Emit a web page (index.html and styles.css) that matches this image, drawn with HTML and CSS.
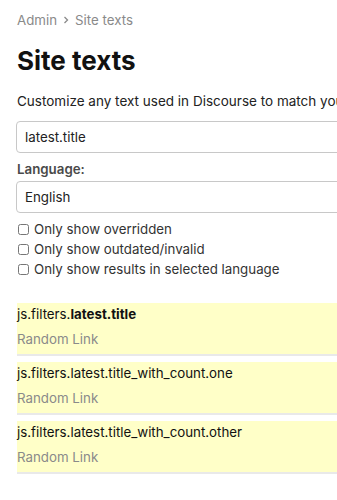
FILE: index.html
```html
<!DOCTYPE html>
<html lang="en">

<head>
    <meta charset="UTF-8">
    <meta name="viewport" content="width=device-width, initial-scale=1.0">
    <title>Site texts - Admin</title>
    <link rel="stylesheet" href="styles.css">
</head>

<body>
    <div id="page">
        <div class="breadcrumb">
            <span>Admin</span>
            <svg class="chevron" width="10" height="10" viewBox="0 0 10 10">
                <path d="M3.5 2 L6.5 5 L3.5 8" fill="none" stroke="#8a8a8a" stroke-width="1.3" />
            </svg>
            <span>Site texts</span>
        </div>

        <h1>Site texts</h1>
        <p class="intro">Customize any text used in Discourse to match your community.</p>

        <div class="search">
            <input type="text" class="field" value="latest.title">
            <label class="field-label">Language:</label>
            <div class="field select">English</div>

            <div class="filters">
                <label class="check"><input type="checkbox"> Only show overridden</label>
                <label class="check"><input type="checkbox"> Only show outdated/invalid</label>
                <label class="check"><input type="checkbox"> Only show results in selected language</label>
            </div>
        </div>

        <div class="results">
            <div class="site-text">
                <div class="site-text-id">js.filters.<b>latest.title</b></div>
                <div class="site-text-value">Random Link</div>
            </div>
            <div class="site-text">
                <div class="site-text-id">js.filters.latest.title_with_count.one</div>
                <div class="site-text-value">Random Link</div>
            </div>
            <div class="site-text">
                <div class="site-text-id">js.filters.latest.title_with_count.other</div>
                <div class="site-text-value">Random Link</div>
            </div>
        </div>
    </div>
</body>

</html>
```

FILE: styles.css
```css
html,
body {
    overflow: hidden;
}

body {
    font-family: Inter, "Noto Sans", sans-serif;
    font-size: 13.3px;
    background-color: #fff;
    color: #222;
    margin: 0;
}

#page {
    width: 560px;
    padding: 10px 16px 0 17px;
}

.breadcrumb {
    display: flex;
    align-items: center;
    gap: 4px;
    color: #8a8a8a;
    height: 20px;
}

h1 {
    font-size: 26px;
    font-weight: 700;
    color: #111;
    margin: 14px 0 0 0;
    line-height: 34px;
}

.intro {
    font-size: 13.5px;
    margin: 13px 0 0 0;
    line-height: 20px;
}

.search {
    margin-top: 10px;
}

.field {
    display: block;
    box-sizing: border-box;
    width: 100%;
    height: 32px;
    margin: 0 0 0 -1px;
    padding: 0 8px;
    border: 1px solid #c8c8c8;
    border-radius: 4px;
    font-family: Inter, sans-serif;
    font-size: 13.3px;
    color: #222;
    background: #fff;
}

.select {
    line-height: 30px;
}

.field-label {
    display: block;
    font-weight: 600;
    color: #4a4a4a;
    margin: 7px 0 3px 0;
    line-height: 18px;
}

.filters {
    margin-top: 6px;
}

.check {
    display: flex;
    align-items: center;
    color: #333;
    height: 20px;
}

.check input {
    width: 11px;
    height: 11px;
    margin: 0 5px 0 1px;
}

.results {
    margin-top: 24px;
}

.site-text {
    background-color: #ffffc8;
    border-bottom: 2px solid #e9e9e9;
    margin-bottom: 6px;
    padding: 3px 0 0 0;
    height: 48px;
}

.site-text-id {
    line-height: 16px;
    color: #111;
}

.site-text-value {
    color: #8a8a8a;
    margin-top: 8px;
    line-height: 18px;
}
```
